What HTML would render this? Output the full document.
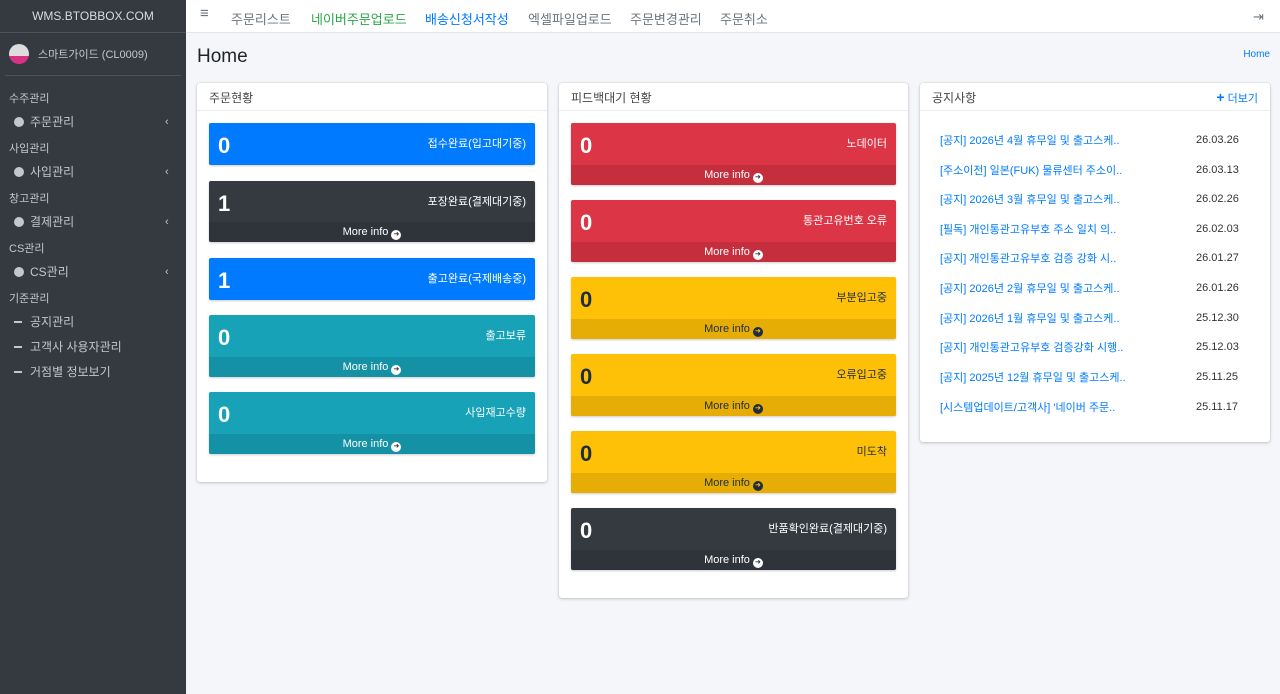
<!DOCTYPE html><html><head><meta charset="utf-8"><style>
*{box-sizing:border-box;margin:0;padding:0}
body{width:1280px;height:694px;overflow:hidden;background:#f4f6f9;font-family:"Liberation Sans","Noto Sans CJK KR",sans-serif;font-size:12px;color:#212529;position:relative}
.sb{position:absolute;left:0;top:0;width:186px;height:694px;background:#343a40;color:#c2c7d0}
.brand{height:33px;line-height:33px;text-align:center;color:#d8dce2;font-size:12px;border-bottom:1px solid #4b545c}
.user{height:43px;border-bottom:1px solid #4b545c;margin:0 5px;display:flex;align-items:center;padding-left:4px;color:#c2c7d0;font-size:11px}
.av{width:20px;height:20px;border-radius:50%;background:linear-gradient(#ddd 60%,#d63384 60%);margin-right:9px}
.hd{padding:0 9px;font-size:11px;height:25px;line-height:28px;color:#c2c7d0}
.it{height:25px;line-height:25px;padding-left:14px;font-size:12px;color:#c2c7d0;position:relative}
.it .c{display:inline-block;width:10px;height:10px;border-radius:50%;background:#c2c7d0;margin-right:6px;vertical-align:-1px}
.it .d{display:inline-block;width:8px;height:2px;background:#c2c7d0;margin-right:8px;vertical-align:3px}
.it .ch{position:absolute;left:165px;top:0;font-size:11px}
.top{position:absolute;left:186px;top:0;right:0;height:33px;background:#fff;border-bottom:1px solid #e5e5e5}
.top span{position:absolute;top:9px;font-size:13px;color:#6c757d}
h1{position:absolute;left:197px;top:46px;font-size:19px;font-weight:400;color:#212529}
.bc{position:absolute;right:10px;top:49px;font-size:10px;color:#007bff}
.card{position:absolute;background:#fff;border-radius:3px;box-shadow:0 0 1px rgba(0,0,0,.2),0 1px 3px rgba(0,0,0,.2)}
.ch2{height:28px;border-bottom:1px solid #eee;padding:6px 12px;font-size:12px;color:#444}
.box{position:absolute;left:12px;right:12px;border-radius:2px;color:#fff;box-shadow:0 1px 2px rgba(0,0,0,.2)}
.box b{position:absolute;left:9px;top:10px;font-size:22px}
.box i{position:absolute;right:9px;top:12px;font-style:normal;font-size:11px}
.box .f{position:absolute;left:0;right:0;bottom:0;height:20px;line-height:20px;text-align:center;background:rgba(0,0,0,.1);font-size:11px}
.f:after{content:"➜";display:inline-block;width:10px;height:10px;border-radius:50%;background:#fff;color:#333;font-size:7px;line-height:10px;margin-left:3px;vertical-align:-1px}
.bl{background:#007bff}.dk{background:#343a40}.tl{background:#17a2b8}.rd{background:#dc3545}.yl{background:#ffc107;color:#1f2d3d}
.yl .f:after{background:#1f2d3d;color:#ffc107}
.n{position:absolute;left:20px;font-size:11px;color:#007bff;line-height:14px;margin-top:1px}
.dt{position:absolute;left:276px;font-size:11px;color:#333;line-height:14px;margin-top:0}
</style></head><body>
<div class="sb"><div class="brand">WMS.BTOBBOX.COM</div>
<div class="user"><div class="av"></div>스마트가이드 (CL0009)</div>
<div style="height:9px"></div>
<div class="hd">수주관리</div><div class="it"><span class="c"></span>주문관리<span class="ch">‹</span></div>
<div class="hd">사입관리</div><div class="it"><span class="c"></span>사입관리<span class="ch">‹</span></div>
<div class="hd">창고관리</div><div class="it"><span class="c"></span>결제관리<span class="ch">‹</span></div>
<div class="hd">CS관리</div><div class="it"><span class="c"></span>CS관리<span class="ch">‹</span></div>
<div class="hd">기준관리</div><div class="it"><span class="d"></span>공지관리</div><div class="it"><span class="d"></span>고객사 사용자관리</div><div class="it"><span class="d"></span>거점별 정보보기</div>
</div>
<div class="top"><span style="left:14px;font-size:15px;top:5px">≡</span><span style="left:45px">주문리스트</span><span style="left:125px;color:#28a745">네이버주문업로드</span><span style="left:239px;color:#007bff">배송신청서작성</span><span style="left:342px">엑셀파일업로드</span><span style="left:444px">주문변경관리</span><span style="left:534px">주문취소</span><span style="left:1067px">⇥</span></div>
<h1>Home</h1><div class="bc">Home</div>
<div class="card" style="left:197px;top:83px;width:350px;height:399px"><div class="ch2">주문현황</div>
<div class="box bl" style="top:40px;height:42px"><b>0</b><i>접수완료(입고대기중)</i></div>
<div class="box dk" style="top:98px;height:61px"><b>1</b><i>포장완료(결제대기중)</i><div class="f">More info</div></div>
<div class="box bl" style="top:175px;height:42px"><b>1</b><i>출고완료(국제배송중)</i></div>
<div class="box tl" style="top:232px;height:62px"><b>0</b><i>출고보류</i><div class="f">More info</div></div>
<div class="box tl" style="top:309px;height:62px"><b>0</b><i>사입재고수량</i><div class="f">More info</div></div>
</div>
<div class="card" style="left:559px;top:83px;width:349px;height:515px"><div class="ch2">피드백대기 현황</div>
<div class="box rd" style="top:40px;height:62px"><b>0</b><i>노데이터</i><div class="f">More info</div></div>
<div class="box rd" style="top:117px;height:62px"><b>0</b><i>통관고유번호 오류</i><div class="f">More info</div></div>
<div class="box yl" style="top:194px;height:62px"><b>0</b><i>부분입고중</i><div class="f">More info</div></div>
<div class="box yl" style="top:271px;height:62px"><b>0</b><i>오류입고중</i><div class="f">More info</div></div>
<div class="box yl" style="top:348px;height:62px"><b>0</b><i>미도착</i><div class="f">More info</div></div>
<div class="box dk" style="top:425px;height:62px"><b>0</b><i>반품확인완료(결제대기중)</i><div class="f">More info</div></div>
</div>
<div class="card" style="left:920px;top:83px;width:350px;height:359px"><div class="ch2">공지사항<span style="float:right;color:#007bff;font-size:11px"><b style="font-size:14px">+</b> 더보기</span></div>
<div class="n" style="top:50px">[공지] 2026년 4월 휴무일 및 출고스케..</div><div class="dt" style="top:50px">26.03.26</div>
<div class="n" style="top:80px">[주소이전] 일본(FUK) 물류센터 주소이..</div><div class="dt" style="top:80px">26.03.13</div>
<div class="n" style="top:109px">[공지] 2026년 3월 휴무일 및 출고스케..</div><div class="dt" style="top:109px">26.02.26</div>
<div class="n" style="top:139px">[필독] 개인통관고유부호 주소 일치 의..</div><div class="dt" style="top:139px">26.02.03</div>
<div class="n" style="top:168px">[공지] 개인통관고유부호 검증 강화 시..</div><div class="dt" style="top:168px">26.01.27</div>
<div class="n" style="top:198px">[공지] 2026년 2월 휴무일 및 출고스케..</div><div class="dt" style="top:198px">26.01.26</div>
<div class="n" style="top:228px">[공지] 2026년 1월 휴무일 및 출고스케..</div><div class="dt" style="top:228px">25.12.30</div>
<div class="n" style="top:257px">[공지] 개인통관고유부호 검증강화 시행..</div><div class="dt" style="top:257px">25.12.03</div>
<div class="n" style="top:287px">[공지] 2025년 12월 휴무일 및 출고스케..</div><div class="dt" style="top:287px">25.11.25</div>
<div class="n" style="top:317px">[시스템업데이트/고객사] '네이버 주문..</div><div class="dt" style="top:317px">25.11.17</div>
</div>
</body></html>
